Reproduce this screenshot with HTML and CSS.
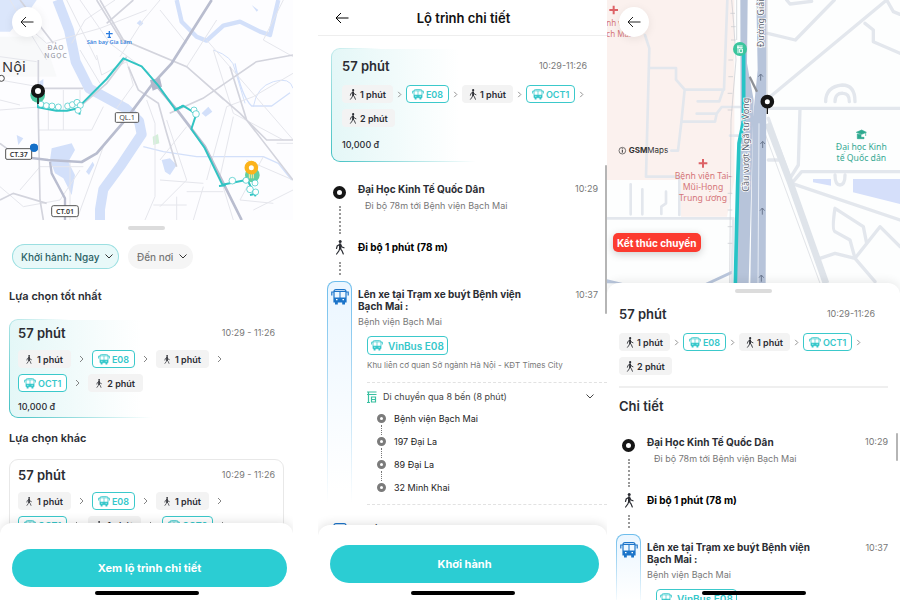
FILE: index.html
```
<!DOCTYPE html>
<html lang="vi">
  <head>
    <meta charset="UTF-8" />
    <meta name="viewport" content="width=device-width, initial-scale=1.0" />
    <title>Lộ trình chi tiết</title>
    <link rel="stylesheet" href="styles.css">
  </head>
  <body>
    <!-- Shared icons -->
    <svg class="sprite" aria-hidden="true">
      <symbol id="back" viewBox="0 0 14 12">
        <path d="M13.500 6H1M6 1L1 6l5 5" fill="none" stroke="currentColor" />
      </symbol>
      <symbol id="down" viewBox="0 0 8 5">
        <path d="M.5.5L4 4 7.500.5" fill="none" stroke="currentColor" />
      </symbol>
      <symbol id="next" viewBox="0 0 5 8">
        <path d="M1 1l3 3-3 3" fill="none" stroke="currentColor" stroke-width=".9" />
      </symbol>
      <symbol id="walk" viewBox="0 0 10 15">
        <circle cx="5.200" cy="1.600" r="1.500" fill="currentColor" />
        <path d="M5 4v5M5 4.200L2.200 6 1.500 8.500M5.400 4.300L7 7l2 .8M4.800 8.500L3.800 11 1.600 14M5.200 8.500L7 10.800 8.300 14" fill="none" stroke="currentColor" stroke-width="1.200" stroke-linecap="round" />
        <path d="M4 3.600h2.200L6.400 9H4z" fill="currentColor" />
      </symbol>
      <symbol id="bus" viewBox="0 0 18 16">
        <path d="M3 2.500Q3 .6 5 .6h8q2 0 2 1.900v10.300H3z" fill="none" stroke="currentColor" stroke-width="1.200" />
        <path d="M3 8.500h12V13H3zM4 13h2.800v2.500H4zM11.200 13H14v2.500h-2.800zM8.500 3h1v5.500h-1zM3 2h12v1H3z" fill="currentColor" />
        <path d="M3 3H.8v3.500M15 3h2.200v3.500" fill="none" stroke="currentColor" stroke-width="1.200" />
        <path d="M5 10.700h1.500M11.500 10.700H13" stroke="#fff" stroke-width="1.200" />
      </symbol>
      <symbol id="stop" viewBox="0 0 10 12">
        <path d="M0 1h9.500M0 3.500h9.500M1.500 1v11M0 11.500h3M4.500 6h4v5h-4zM4.500 8.500h4" fill="none" stroke="currentColor" stroke-width="1.200" />
      </symbol>
    </svg>

    <div class="screens">
      <!-- Route options -->
      <section class="phone first">
        <div class="map">
          <svg class="map-art" viewBox="0 0 879 660" preserveAspectRatio="xMidYMid slice" role="img" aria-label="Bản đồ lộ trình">
            <rect width="879" height="660" fill="#fdfdff" />
            <path d="M0 0h110L92 26 60 60 30 95H0z" fill="#dbe6fb" />
            <path d="M0 110h130l40 120H0z" fill="#f8f9fa" />
            <!-- water -->
            <g fill="none" stroke="#d3e0fa" stroke-linejoin="round">
              <path d="M172 0l35 90 20 95 40 80 110 60 40 38 8 40-60 90-55 75-10 60 0 40" stroke-width="30" />
              <path d="M530 0l15 65 45 45 30 12 50-45 50-12 60 30 30 10 25-105" stroke-width="13" />
              <path d="M705 190q20 100 50 128h60l55-40M430 440l60 15 100 15 200 0 45 20 40 50" stroke-width="4" />
              <path d="M640 150q60 20 65 60l30 100" stroke-width="3" />
              <path d="M760 320q10-60 60-75t59 20" stroke-width="3" />
            </g>
            <path d="M155 445l60-15 10 20-20 35 20 40-10 60-25-50-25-15-15-40zM605 340l20-20 12 15-20 15zM258 515l20-30 5 10-16 30zM410 70l10-10 10 10-8 8zM755 15l20 15-5 5zM50 405l20 10-15 20zM485 480l25-5 20 20-20 30-15-10zM118 245l12-8v20l-12 5z" fill="#d3e0fa" />
            <path d="M458 410l16-8 4 28-18 5z" fill="#d4efd9" />
            <!-- minor roads -->
            <g fill="none" stroke="#e5e6ec" stroke-width="3">
              <path d="M0 170l110 15M0 240l115 20M0 330l130-10M0 300l60 15M30 0l110 180M60 60l80 70 160-45L440 30M240 0l90 130 120 90M345 0l-90 60-40 70M480 0l-50 60-70 110M560 130L480 30M620 120l260 300M640 150l60 190 150 80M879 220L760 290l-80 30-60 220M290 165l15 60 75-40 20 70-50 70" />
              <path d="M115 390h160l35-70M145 330v60M190 270v120M240 270v60M60 570l60-70h130M0 560l70 60 110-20 60-90M210 480v180M310 440l-80 220M440 300l25 70v220l-30 70M500 360l60 180-80 80M700 350l-40 180 40 130M480 540l130 10M560 380l-80 100M610 560l-30 100M740 480l139 60M790 470l-70 130 100 10M560 575l110 0M240 150l60 100M460 615h100M830 430h49M530 590v70M760 630l119-60M200 0l90 180M850 0l-60 120 89 50M650 60L560 200l110 100" />
            </g>
            <g fill="none" stroke="#d3d4dd" stroke-width="5">
              <path d="M300 0L370 120 560 200 720 340 800 420h79M370 130L290 0M115 180v170l5 250 10 60M879 165l-110 20-160 110-100 45M0 600l40-20 100 30M130 265h120M0 430l40 30M240 320l80-70 60-80M385 200l30 70 60 40 25 90 30 100M60 0l100 130M690 200l50 160 139 180M400 0l-80 70" />
            </g>
            <!-- highways -->
            <g fill="none" stroke="#b9bdcf" stroke-linejoin="round">
              <path d="M635 0l-120 190-60 65-75 100-90 105-45 26-100-6-50-6" stroke-width="8" />
              <path d="M455 240l80 95 80 105 60 120 50 100" stroke-width="8" />
              <path d="M150 485l5 35 40 75v65" stroke-width="7" />
            </g>
            <path d="M450 240l30-6 6 26-28 12z" fill="#b3b8cc" />
            <!-- route -->
            <path d="M114 290v32l55 10h32l36-8 2 20M237 320l83-83 50-62 55 24 50 58 52 73 22-13 40 25-15 45 40 57 53 110 75-15 10 20 15 30" fill="none" stroke="#31c4c3" stroke-width="6" stroke-linejoin="round" />
            <path d="M522 330l28-12M657 558l20-2M750 585l22-5" stroke="#31c4c3" stroke-width="6" />
            <circle cx="113" cy="286" r="22" fill="#4ec9a2" />
            <circle cx="757" cy="525" r="22" fill="#63cfa0" />
            <g fill="#fff" stroke="#31c4c3" stroke-width="2">
              <circle cx="123" cy="313" r="9" /><circle cx="139" cy="317" r="9" /><circle cx="156" cy="318" r="9" />
              <circle cx="175" cy="321" r="9" /><circle cx="203" cy="318" r="9" /><circle cx="217" cy="314" r="9" />
              <circle cx="231" cy="307" r="9" /><circle cx="241" cy="316" r="9" /><circle cx="234" cy="331" r="9" />
              <circle cx="582" cy="330" r="9" /><circle cx="588" cy="342" r="10" /><circle cx="697" cy="542" r="10" />
              <circle cx="738" cy="541" r="9" /><circle cx="765" cy="549" r="9" /><circle cx="750" cy="568" r="10" /><circle cx="767" cy="576" r="9" />
            </g>
            <path d="M114 290v22" stroke="#151515" stroke-width="5" />
            <circle cx="114" cy="273" r="15" fill="#fff" stroke="#151515" stroke-width="12" />
            <path d="M748 520v15M754 520v15M760 520v15" stroke="#ffe9a8" stroke-width="3" />
            <circle cx="754" cy="503" r="14" fill="#fff" stroke="#fbb31c" stroke-width="13" />
            <circle cx="102" cy="443" r="12" fill="#1570c8" />
            <circle cx="4" cy="235" r="9" fill="#fff" stroke="#444" stroke-width="3" />
            <!-- labels -->
            <path d="M328 93v21M318 101h20M323 112h10" stroke="#2b7de0" stroke-width="4" />
            <text x="328" y="132" class="map-label" font-size="17" font-weight="600" fill="#3b86de">Sân bay Gia Lâm</text>
            <text x="168" y="149" class="map-label" font-size="20" letter-spacing="3" fill="#8a8d98">ĐẢO</text>
            <text x="168" y="174" class="map-label" font-size="20" letter-spacing="3" fill="#8a8d98">NGỌC</text>
            <text x="42" y="215" class="map-label" font-size="44" fill="#333">Nội</text>
            <g fill="#fff" stroke="#555" stroke-width="3">
              <rect x="346" y="338" width="70" height="29" rx="3" />
              <rect x="17" y="446" width="78" height="32" rx="4" />
              <rect x="155" y="617" width="80" height="33" rx="6" />
            </g>
            <circle cx="102" cy="443" r="12" fill="#1570c8" />
            <text x="381" y="361" class="map-label" font-size="22" fill="#444">QL.1</text>
            <text x="56" y="470" class="map-label" font-size="21" font-weight="600" fill="#333">CT.37</text>
            <text x="195" y="641" class="map-label" font-size="21" font-weight="600" fill="#333">CT.01</text>
          </svg>
          <button class="round-back" aria-label="Quay lại"><svg class="icon-back"><use href="#back" /></svg></button>
        </div>

        <div class="options">
          <div class="handle"></div>
          <div class="filters">
            <div class="filter active">
              <select aria-label="Khởi hành">
                <option>Khởi hành: Ngay</option>
              </select>
              <svg class="icon-down"><use href="#down" /></svg>
            </div>
            <div class="filter">
              <select aria-label="Đến nơi">
                <option>Đến nơi</option>
              </select>
              <svg class="icon-down"><use href="#down" /></svg>
            </div>
          </div>

          <h2>Lựa chọn tốt nhất</h2>
          <article class="card best">
            <div class="card-head">
              <h3>57 phút</h3>
              <time>10:29 - 11:26</time>
            </div>
            <div class="legs">
              <span class="leg"><svg class="icon-walk"><use href="#walk" /></svg>1 phút</span>
              <svg class="icon-next"><use href="#next" /></svg>
              <span class="leg line"><svg class="icon-bus"><use href="#bus" /></svg>E08</span>
              <svg class="icon-next"><use href="#next" /></svg>
              <span class="leg"><svg class="icon-walk"><use href="#walk" /></svg>1 phút</span>
              <svg class="icon-next"><use href="#next" /></svg>
            </div>
            <div class="legs">
              <span class="leg line"><svg class="icon-bus"><use href="#bus" /></svg>OCT1</span>
              <svg class="icon-next"><use href="#next" /></svg>
              <span class="leg"><svg class="icon-walk"><use href="#walk" /></svg>2 phút</span>
            </div>
            <p class="price">10,000 đ</p>
          </article>

          <h2 class="other">Lựa chọn khác</h2>
          <article class="card plain">
            <div class="card-head">
              <h3>57 phút</h3>
              <time>10:29 - 11:26</time>
            </div>
            <div class="legs">
              <span class="leg"><svg class="icon-walk"><use href="#walk" /></svg>1 phút</span>
              <svg class="icon-next"><use href="#next" /></svg>
              <span class="leg line"><svg class="icon-bus"><use href="#bus" /></svg>E08</span>
              <svg class="icon-next"><use href="#next" /></svg>
              <span class="leg"><svg class="icon-walk"><use href="#walk" /></svg>1 phút</span>
              <svg class="icon-next"><use href="#next" /></svg>
            </div>
            <div class="legs">
              <span class="leg line"><svg class="icon-bus"><use href="#bus" /></svg>OCT1</span>
              <svg class="icon-next"><use href="#next" /></svg>
              <span class="leg"><svg class="icon-walk"><use href="#walk" /></svg>1 phút</span>
              <svg class="icon-next"><use href="#next" /></svg>
              <span class="leg line"><svg class="icon-bus"><use href="#bus" /></svg>OCT2</span>
              <svg class="icon-next"><use href="#next" /></svg>
            </div>
          </article>
        </div>

        <footer class="footer tall">
          <button class="primary">Xem lộ trình chi tiết</button>
        </footer>
        <div class="home-bar"></div>
      </section>

      <!-- Route detail -->
      <section class="phone detail">
        <header class="top-bar">
          <button class="plain-back" aria-label="Quay lại"><svg class="icon-back"><use href="#back" /></svg></button>
          <h1>Lộ trình chi tiết</h1>
        </header>

        <div class="detail-body">
          <article class="card best roomy">
            <div class="card-head">
              <h3>57 phút</h3>
              <time>10:29-11:26</time>
            </div>
            <div class="legs tight">
              <span class="leg"><svg class="icon-walk"><use href="#walk" /></svg>1 phút</span>
              <svg class="icon-next"><use href="#next" /></svg>
              <span class="leg line"><svg class="icon-bus"><use href="#bus" /></svg>E08</span>
              <svg class="icon-next"><use href="#next" /></svg>
              <span class="leg"><svg class="icon-walk"><use href="#walk" /></svg>1 phút</span>
              <svg class="icon-next"><use href="#next" /></svg>
              <span class="leg line"><svg class="icon-bus"><use href="#bus" /></svg>OCT1</span>
              <svg class="icon-next"><use href="#next" /></svg>
            </div>
            <div class="legs tight">
              <span class="leg"><svg class="icon-walk"><use href="#walk" /></svg>2 phút</span>
            </div>
            <p class="price">10,000 đ</p>
          </article>

          <ol class="timeline">
            <li class="step start">
              <div class="rail"><span class="dot"></span><span class="dots"></span></div>
              <div class="step-text">
                <h4>Đại Học Kinh Tế Quốc Dân</h4>
                <p class="indent">Đi bộ 78m tới Bệnh viện Bạch Mai</p>
              </div>
              <time>10:29</time>
            </li>
            <li class="step walking">
              <div class="rail"><svg class="icon-walk"><use href="#walk" /></svg><span class="dots"></span></div>
              <div class="step-text"><h4>Đi bộ 1 phút (78 m)</h4></div>
            </li>
            <li class="step ride">
              <div class="rail"><svg class="icon-bus"><use href="#bus" /></svg></div>
              <div class="step-text">
                <h4>Lên xe tại Trạm xe buýt Bệnh viện Bạch Mai :</h4>
                <p>Bệnh viện Bạch Mai</p>
                <div class="trip">
                  <span class="bus-name"><svg class="icon-bus"><use href="#bus" /></svg>VinBus E08</span>
                  <p class="direction">Khu liên cơ quan Sở ngành Hà Nội - KĐT Times City</p>
                </div>
              </div>
              <time>10:37</time>
              <details class="stops" open>
                <summary><svg class="icon-stop"><use href="#stop" /></svg>Di chuyển qua 8 bến (8 phút)<svg class="icon-down"><use href="#down" /></svg></summary>
                <ul>
                  <li>Bệnh viện Bạch Mai</li>
                  <li>197 Đại La</li>
                  <li>89 Đại La</li>
                  <li>32 Minh Khai</li>
                </ul>
              </details>
            </li>
            <li class="step alight">
              <div class="rail"><svg class="icon-bus"><use href="#bus" /></svg></div>
              <h4>Xuống xe tại Trạm xe buýt Times City 458 Minh Khai</h4>
            </li>
          </ol>
        </div>
        <div class="scrollbar long"></div>

        <footer class="footer">
          <button class="primary">Khởi hành</button>
        </footer>
        <div class="home-bar"></div>
      </section>

      <!-- Trip in progress -->
      <section class="phone trip-screen">
        <div class="map large">
          <svg class="map-art" viewBox="6 0 879 885" preserveAspectRatio="xMidYMin slice" role="img" aria-label="Bản đồ chuyến đi">
            <rect width="900" height="900" fill="#fdfefe" />
            <path d="M6 0h382v540l-22 110H228V540H6z" fill="#fbf1ee" />
            <path d="M624 537h54v20l-54-10zM744 537h141v75l-141-35z" fill="#d5dffa" />
            <!-- streets -->
            <g fill="none" stroke="#e3e7ed" stroke-width="10" stroke-linejoin="round" stroke-linecap="round">
              <path d="M120 105l13 40-10 385h100v115M133 204h80v35l26 30h118l10-269M239 269l-10 98-10 85h-20M232 365h98l5-24h-60M278 304h65l10-30M335 341l15-20h55M375 407h30" stroke-width="8" />
              <path d="M77 553v90M112 568v75M183 575v35l-14 10v22M6 655h375M385 655l-5 195" stroke-width="8" />
              <path d="M488 100l83 20L688 0M490 295L845 0M780 70l25 20v35l80 35M845 0l20 35 20 8M545 0l10 12 65-8M490 325h395M585 325l-5 170-25 40-65-180M885 515H590l-30 35 325 110M662 305q0-45 50-50 38 0 38 50M690 305q0-27 25-25 18 0 18 25M690 525q0 30 15 30 15 0 15-30M490 480h40" />
              <path d="M690 625q-10 65 0 70l45 25 15 55 75-95 60 60M690 625l85 55 10 50M645 775l45-15 60 15 60 70" />
            </g>
            <path d="M488 370l65 170 110 310" fill="none" stroke="#dfe4ea" stroke-width="20" />
            <path d="M480 400l165 450" fill="none" stroke="#d3d7dd" stroke-width="2" />
            <path d="M6 838l50 12H6zM300 850l80-38v10l-60 28z" fill="#b9c6dc" />
            <!-- railway -->
            <path d="M380 0l6 70 7 110-15 180-4 490M395 0v120M486 0v300" fill="none" stroke="#c5c8ce" stroke-width="2" />
            <path d="M376 40h14M378 80h14M378 120h14M370 180h14M370 230h14M368 280h14M368 330h14M368 530h14M368 580h14M368 630h14M368 680h14M368 730h14" stroke="#c5c8ce" stroke-width="2" />
            <!-- main road -->
            <path d="M406 0h22l-2 190 20 110-15 550h-42l18-420z" fill="#b7c4da" />
            <path d="M454 0h30v200l-2 650h-46l8-500 14-140z" fill="#b7c4da" />
            <path d="M462 370l-3 480" stroke="#e6ecf5" stroke-width="3" />
            <path d="M434 230l22 45" stroke="#8d9096" stroke-width="7" />
            <path d="M416 160v200l-14 70-4 120-7 300" fill="none" stroke="#27c4c6" stroke-width="11" />
            <g fill="none" stroke="#6d7a91" stroke-width="3">
              <path d="M467 242v-20M460 230l7-8 7 8M473 444v-20M466 432l7-8 7 8M472 644v-20M465 632l7-8 7 8M469 845v-20M462 833l7-8 7 8" />
            </g>
            <circle cx="405" cy="147" r="21" fill="#3bc59d" />
            <path d="M396 138h17M396 143h17M399 138v22M404 147h8v11h-8z" fill="none" stroke="#fff" stroke-width="3" />
            <path d="M487 310v32" stroke="#151515" stroke-width="4" />
            <circle cx="487" cy="305" r="14" fill="#fff" stroke="#151515" stroke-width="13" />
            <!-- labels -->
            <g class="halo">
              <text transform="translate(431 434) rotate(-90)" class="map-label" font-size="27" fill="#5c6370">Cầu vượt Ngã tư Vọng</text>
              <text transform="translate(477 70) rotate(-90)" class="map-label" font-size="27" fill="#5c6370">Đường Giải</text>
            </g>
            <path d="M26 17v26M13 30h26M294 477v26M281 490h26" stroke="#dd6266" stroke-width="6" />
            <text x="4" y="78" font-size="24" fill="#d57679">nh viện</text>
            <text x="4" y="110" font-size="24" fill="#d57679">ch Mai</text>
            <text x="294" y="537" class="map-label" font-size="26" fill="#d57679">Bệnh viện Tai-</text>
            <text x="294" y="570" class="map-label" font-size="26" fill="#d57679">Mũi-Họng</text>
            <text x="294" y="603" class="map-label" font-size="26" fill="#d57679">Trung ương</text>
            <path d="M754 397l16-7 14 7-14 6zM757 402v14h20v-4h-9v-8zM782 398v10" fill="#2da98f" stroke="#2da98f" stroke-width="2" />
            <text x="769" y="449" class="map-label" font-size="26" fill="#36a994">Đại học Kinh</text>
            <text x="769" y="482" class="map-label" font-size="26" fill="#36a994">tế Quốc dân</text>
            <circle cx="52" cy="452" r="10" fill="none" stroke="#333" stroke-width="2" />
            <path d="M52 450v8M52 445v3" stroke="#333" stroke-width="3" />
            <text x="71" y="460" class="brand" font-size="24" fill="#333"><tspan font-weight="700">GSM</tspan>Maps</text>
          </svg>
          <button class="round-back" aria-label="Quay lại"><svg class="icon-back"><use href="#back" /></svg></button>
          <button class="end-trip">Kết thúc chuyến</button>
        </div>

        <div class="sheet">
          <div class="handle"></div>
          <div class="summary">
            <div class="card-head">
              <h3>57 phút</h3>
              <time>10:29-11:26</time>
            </div>
            <div class="legs tight">
              <span class="leg"><svg class="icon-walk"><use href="#walk" /></svg>1 phút</span>
              <svg class="icon-next"><use href="#next" /></svg>
              <span class="leg line"><svg class="icon-bus"><use href="#bus" /></svg>E08</span>
              <svg class="icon-next"><use href="#next" /></svg>
              <span class="leg"><svg class="icon-walk"><use href="#walk" /></svg>1 phút</span>
              <svg class="icon-next"><use href="#next" /></svg>
              <span class="leg line"><svg class="icon-bus"><use href="#bus" /></svg>OCT1</span>
              <svg class="icon-next"><use href="#next" /></svg>
            </div>
            <div class="legs tight">
              <span class="leg"><svg class="icon-walk"><use href="#walk" /></svg>2 phút</span>
            </div>
            <h3 class="detail-title">Chi tiết</h3>
          </div>

          <ol class="timeline">
            <li class="step start">
              <div class="rail"><span class="dot"></span><span class="dots"></span></div>
              <div class="step-text">
                <h4>Đại Học Kinh Tế Quốc Dân</h4>
                <p class="indent">Đi bộ 78m tới Bệnh viện Bạch Mai</p>
              </div>
              <time>10:29</time>
            </li>
            <li class="step walking">
              <div class="rail"><svg class="icon-walk"><use href="#walk" /></svg><span class="dots"></span></div>
              <div class="step-text"><h4>Đi bộ 1 phút (78 m)</h4></div>
            </li>
            <li class="step ride">
              <div class="rail"><svg class="icon-bus"><use href="#bus" /></svg></div>
              <div class="step-text">
                <h4>Lên xe tại Trạm xe buýt Bệnh viện Bạch Mai :</h4>
                <p>Bệnh viện Bạch Mai</p>
                <div class="trip">
                  <span class="bus-name"><svg class="icon-bus"><use href="#bus" /></svg>VinBus E08</span>
                </div>
              </div>
              <time>10:37</time>
            </li>
          </ol>
        </div>
        <div class="scrollbar short"></div>
        <div class="home-bar"></div>
      </section>
    </div>
  </body>
</html>
```
FILE: styles.css
```
*, *::before, *::after {
  box-sizing: border-box;
}
body {
  margin: 0;
  background: #fff;
  color: #2b2d33;
  font-family: Inter, "Noto Sans", sans-serif;
  font-size: 9px;
}
h1, h2, h3, h4, p, ol, ul {
  margin: 0;
  padding: 0;
}
ol, ul {
  list-style: none;
}
button, select {
  font-family: inherit;
  border: none;
  padding: 0;
  cursor: pointer;
}
svg {
  flex: none;
}
.sprite {
  display: none;
}
.screens {
  display: grid;
  grid-template-columns: 318fr 289fr 293fr;
  height: 100vh;
}
.phone {
  position: relative;
  display: flex;
  flex-direction: column;
  min-width: 0;
  height: 100vh;
  overflow: hidden;
  background: #fff;
}
.first {
  margin-right: 25px;
}

/* icons */
.icon-back {
  width: 14px;
  height: 12px;
}
.icon-down {
  width: 8px;
  height: 5px;
}
.icon-next {
  width: 5px;
  height: 8px;
  color: #777;
}
.icon-walk {
  width: 6px;
  height: 9px;
}
.tight .icon-walk {
  width: 8px;
  height: 11px;
}
.tight .icon-next {
  height: 7px;
}
.icon-bus {
  width: 12px;
  height: 11px;
}
.icon-stop {
  width: 10px;
  height: 12px;
  color: #38bfa0;
}

/* maps */
.map {
  position: relative;
  flex: none;
  height: 220px;
}
.map.large {
  height: 295px;
}
.map-art {
  display: block;
  width: 100%;
  height: 100%;
  font-family: "Noto Sans", sans-serif;
}
.map-label {
  text-anchor: middle;
}
.halo {
  paint-order: stroke;
  stroke: #fff;
  stroke-width: 5px;
}
.brand {
  font-family: Inter, sans-serif;
}
.round-back {
  position: absolute;
  top: 7px;
  left: 12px;
  width: 30px;
  height: 30px;
  display: flex;
  align-items: center;
  justify-content: center;
  border-radius: 50%;
  background: #fff;
  color: #222;
  box-shadow: 0 2px 10px rgba(0, 0, 0, 0.08);
}
.end-trip {
  position: absolute;
  top: 233px;
  left: 6px;
  height: 19px;
  padding: 0 4px;
  border-radius: 5px;
  background: #fc3b30;
  color: #fff;
  font-size: 10px;
  font-weight: 700;
  box-shadow: 0 2px 8px rgba(0, 0, 0, 0.2);
}

/* route options */
.handle {
  width: 37px;
  height: 4px;
  margin: 0 auto;
  border-radius: 2px;
  background: #dcdcdc;
}
.options {
  flex: 1;
  min-height: 0;
  overflow: hidden;
  padding: 6px 9px 0;
}
.filters {
  display: flex;
  gap: 9px;
  margin: 14px 3px 20px;
}
.filter {
  position: relative;
  display: flex;
  align-items: center;
  border-radius: 13px;
  background: #f5f5f5;
  color: #777;
}
.filter select {
  appearance: none;
  height: 25px;
  padding: 0 19px 0 9px;
  border-radius: 13px;
  background: transparent;
  color: inherit;
  font-size: 10px;
  font-weight: 500;
}
.filter .icon-down {
  position: absolute;
  right: 6px;
  color: #333;
  pointer-events: none;
}
.filter.active {
  background: #e8f9f9;
  color: #2b6266;
  box-shadow: inset 0 0 0 1px #9bdfe1;
}
h2 {
  font-size: 11px;
  line-height: 14px;
  font-weight: 600;
}
.other {
  margin-top: 13px;
}
.card {
  margin-top: 16px;
  padding: 4px 8px 3px;
  border: 1px solid transparent;
  border-radius: 9px;
}
.card.best {
  background:
    linear-gradient(90deg, #e4f7f7, #fff 48%) padding-box,
    linear-gradient(50deg, #3fc0c2, #fff 40%) border-box;
}
.card.plain {
  margin-top: 14px;
  padding-top: 6px;
  border-color: #e8e8e8;
}
.card.roomy {
  margin: 0 9px 0 13px;
  padding: 8px 10px 9px;
}
.card-head {
  display: flex;
  justify-content: space-between;
  align-items: center;
  margin-bottom: 8px;
}
h3 {
  font-size: 13px;
  line-height: 18px;
  font-weight: 600;
}
time {
  color: #777;
  font-size: 9px;
  line-height: 14px;
}
.legs {
  display: flex;
  align-items: center;
  gap: 8px;
}
.legs + .legs {
  margin-top: 6px;
}
.leg {
  display: flex;
  align-items: center;
  gap: 5px;
  height: 18px;
  padding: 0 8px;
  border-radius: 4px;
  background: #f3f3f3;
  font-weight: 600;
  white-space: nowrap;
}
.leg.line {
  gap: 2px;
  padding: 0 5px;
  border: 1px solid #3bc9cb;
  background: #fff;
  color: #35c7ca;
}
.legs.tight {
  gap: 4px;
}
.tight .leg {
  gap: 3px;
  padding: 0 7px;
}
.tight .leg.line {
  gap: 2px;
  padding: 0 5px;
}
.price {
  margin-top: 8px;
  line-height: 14px;
  font-weight: 500;
}

/* bottom action */
.footer {
  position: relative;
  flex: none;
  margin-top: -12px;
  padding: 20px 8px 17px 12px;
  border-radius: 12px 12px 0 0;
  background: #fff;
  box-shadow: 0 -2px 10px rgba(0, 0, 0, 0.1);
}
.footer.tall {
  padding: 26px 6px 13px 12px;
}
.primary {
  display: block;
  width: 100%;
  height: 38px;
  border-radius: 19px;
  background: #2bcdd3;
  color: #fff;
  font-size: 11px;
  font-weight: 700;
}
.home-bar {
  position: absolute;
  bottom: 5px;
  left: 50%;
  width: 104px;
  height: 4px;
  margin-left: -52px;
  border-radius: 2px;
  background: #000;
}
.scrollbar {
  position: absolute;
  right: 1px;
  width: 2px;
  border-radius: 1px;
  background: #b5b5b5;
}
.scrollbar.long {
  top: 165px;
  right: 0;
  height: 149px;
}
.scrollbar.short {
  top: 433px;
  right: 2px;
  height: 28px;
}

/* route detail */
.top-bar {
  display: grid;
  grid-template-columns: 14px 1fr 14px;
  align-items: center;
  flex: none;
  height: 36px;
  padding: 0 15px 0 17px;
  border-bottom: 1px solid #eee;
}
.plain-back {
  background: none;
  line-height: 0;
}
h1 {
  color: #111;
  font-size: 13px;
  font-weight: 600;
  text-align: center;
}
.detail-body {
  flex: 1;
  min-height: 0;
  overflow: hidden;
  padding-top: 12px;
}
.roomy .card-head,
.summary .card-head {
  margin-bottom: 10px;
}
.roomy .price {
  margin-top: 11px;
}
.timeline {
  padding: 20px 9px 0;
}
.step {
  display: grid;
  grid-template-columns: 25px 1fr auto;
  column-gap: 6px;
}
.start {
  min-height: 58px;
}
.walking {
  min-height: 41px;
}
.rail {
  display: flex;
  flex-direction: column;
  align-items: center;
  grid-row: span 2;
}
.dot {
  width: 13px;
  height: 13px;
  margin-top: 4px;
  border: 4px solid #161616;
  border-radius: 50%;
}
.dots {
  flex: 1;
  margin: 7px 0 6px;
  border-left: 2px dotted #999;
}
.rail .icon-walk {
  width: 10px;
  height: 15px;
}
.rail .icon-bus {
  width: 18px;
  height: 16px;
  color: #1c74c9;
}
.step-text p {
  color: #777;
  line-height: 12px;
}
.step-text .indent {
  margin: 4px 0 0 7px;
}
h4 {
  font-size: 10px;
  line-height: 14px;
  font-weight: 700;
}
.walking h4 {
  color: #000;
}
.ride .rail {
  padding-top: 7px;
  border: 1px solid transparent;
  border-radius: 8px;
  background:
    linear-gradient(#ebf6ff, #fff 90%) padding-box,
    linear-gradient(#6dbdec, #fff 95%) border-box;
}
.ride .step-text,
.ride time {
  padding-top: 7px;
}
.ride h4 {
  max-width: 180px;
  margin-bottom: 4px;
  line-height: 12px;
}
.alight {
  grid-template-columns: 25px 1fr;
  padding-top: 9px;
}
.trip {
  padding: 8px 0 0 9px;
}
.bus-name {
  display: inline-flex;
  align-items: center;
  gap: 5px;
  height: 19px;
  padding: 0 3px;
  border: 1px solid #3bc9cb;
  border-radius: 4px;
  color: #35c7ca;
  font-size: 10px;
  font-weight: 600;
}
.step-text .direction {
  margin-top: 4px;
  font-size: 8px;
  white-space: nowrap;
}
.stops {
  grid-column: 2 / 4;
  margin: 11px -9px 9px 9px;
  border: dashed #e2e2e2;
  border-width: 1px 0;
  color: #222;
}
.stops summary {
  display: flex;
  align-items: center;
  gap: 6px;
  height: 24px;
  padding: 3px 13px 0 0;
  list-style: none;
  color: #444;
  cursor: pointer;
}
.stops summary .icon-down {
  margin-left: auto;
}
.stops ul {
  padding: 0 0 5px 10px;
}
.stops li {
  position: relative;
  display: flex;
  align-items: center;
  gap: 8px;
  height: 23px;
}
.stops li::before {
  content: "";
  width: 9px;
  height: 9px;
  border: 3px solid #7b7b7b;
  border-radius: 50%;
}
.stops li + li::after {
  content: "";
  position: absolute;
  top: -5px;
  left: 4px;
  height: 10px;
  border-left: 1px dotted #777;
}

/* trip in progress */
.sheet {
  position: relative;
  flex: 1;
  min-height: 0;
  overflow: hidden;
  margin-top: -12px;
  padding-top: 6px;
  border-radius: 12px 12px 0 0;
  background: #fff;
  box-shadow: 0 -2px 10px rgba(0, 0, 0, 0.08);
}
.summary {
  padding: 12px 12px 0;
}
.summary .card-head {
  padding-right: 13px;
}
.detail-title {
  margin-top: 11px;
  padding-top: 9px;
  border-top: 2px solid #efefef;
}
.sheet .timeline {
  padding-right: 12px;
}
```
